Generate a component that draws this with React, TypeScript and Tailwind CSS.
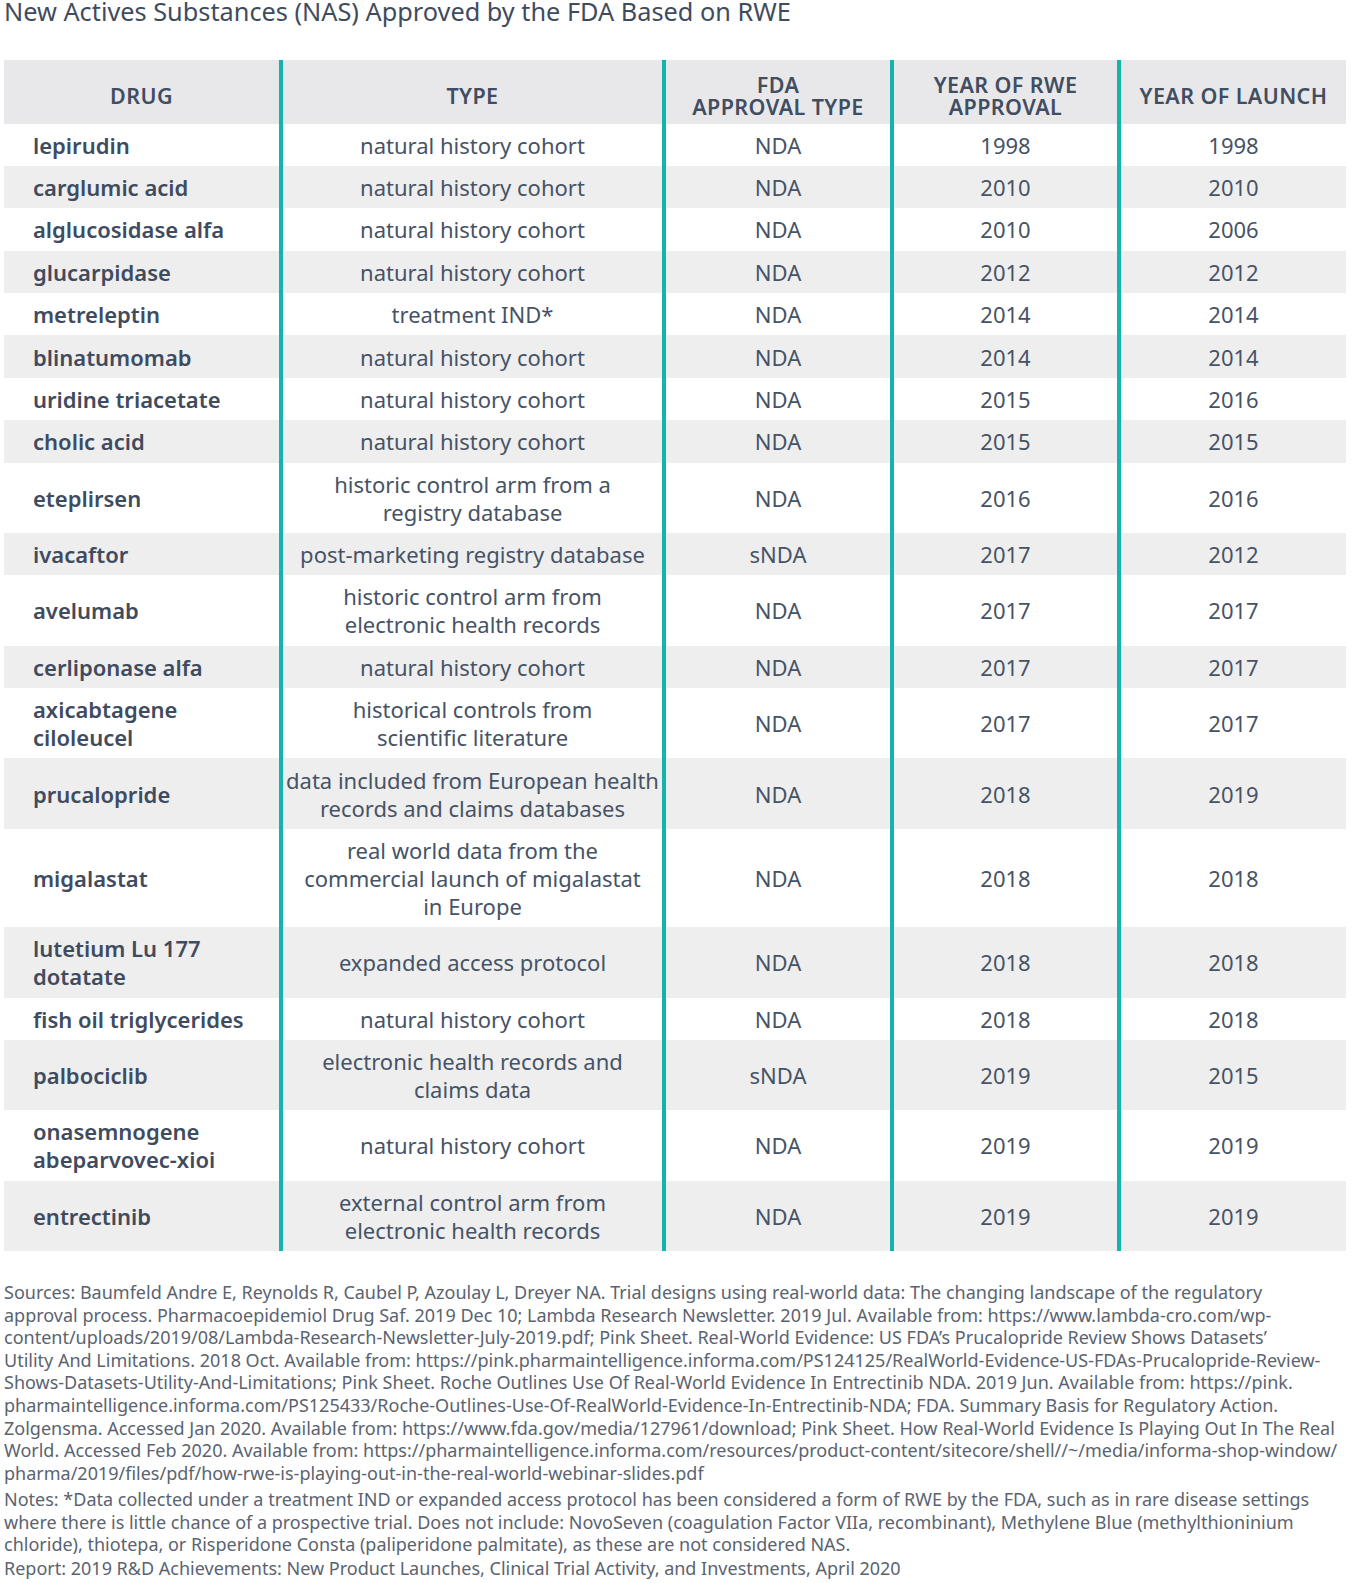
const rows: { drug: string[]; type: string[]; fda: string; rwe: string; launch: string }[] = [
  { drug: ["lepirudin"], type: ["natural history cohort"], fda: "NDA", rwe: "1998", launch: "1998" },
  { drug: ["carglumic acid"], type: ["natural history cohort"], fda: "NDA", rwe: "2010", launch: "2010" },
  { drug: ["alglucosidase alfa"], type: ["natural history cohort"], fda: "NDA", rwe: "2010", launch: "2006" },
  { drug: ["glucarpidase"], type: ["natural history cohort"], fda: "NDA", rwe: "2012", launch: "2012" },
  { drug: ["metreleptin"], type: ["treatment IND*"], fda: "NDA", rwe: "2014", launch: "2014" },
  { drug: ["blinatumomab"], type: ["natural history cohort"], fda: "NDA", rwe: "2014", launch: "2014" },
  { drug: ["uridine triacetate"], type: ["natural history cohort"], fda: "NDA", rwe: "2015", launch: "2016" },
  { drug: ["cholic acid"], type: ["natural history cohort"], fda: "NDA", rwe: "2015", launch: "2015" },
  { drug: ["eteplirsen"], type: ["historic control arm from a", "registry database"], fda: "NDA", rwe: "2016", launch: "2016" },
  { drug: ["ivacaftor"], type: ["post-marketing registry database"], fda: "sNDA", rwe: "2017", launch: "2012" },
  { drug: ["avelumab"], type: ["historic control arm from", "electronic health records"], fda: "NDA", rwe: "2017", launch: "2017" },
  { drug: ["cerliponase alfa"], type: ["natural history cohort"], fda: "NDA", rwe: "2017", launch: "2017" },
  { drug: ["axicabtagene", "ciloleucel"], type: ["historical controls from", "scientific literature"], fda: "NDA", rwe: "2017", launch: "2017" },
  { drug: ["prucalopride"], type: ["data included from European health", "records and claims databases"], fda: "NDA", rwe: "2018", launch: "2019" },
  { drug: ["migalastat"], type: ["real world data from the", "commercial launch of migalastat", "in Europe"], fda: "NDA", rwe: "2018", launch: "2018" },
  { drug: ["lutetium Lu 177", "dotatate"], type: ["expanded access protocol"], fda: "NDA", rwe: "2018", launch: "2018" },
  { drug: ["fish oil triglycerides"], type: ["natural history cohort"], fda: "NDA", rwe: "2018", launch: "2018" },
  { drug: ["palbociclib"], type: ["electronic health records and", "claims data"], fda: "sNDA", rwe: "2019", launch: "2015" },
  { drug: ["onasemnogene", "abeparvovec-xioi"], type: ["natural history cohort"], fda: "NDA", rwe: "2019", launch: "2019" },
  { drug: ["entrectinib"], type: ["external control arm from", "electronic health records"], fda: "NDA", rwe: "2019", launch: "2019" },
];

const sources = [
  "Sources: Baumfeld Andre E, Reynolds R, Caubel P, Azoulay L, Dreyer NA. Trial designs using real-world data: The changing landscape of the regulatory",
  "approval process. Pharmacoepidemiol Drug Saf. 2019 Dec 10; Lambda Research Newsletter. 2019 Jul. Available from: https://www.lambda-cro.com/wp-",
  "content/uploads/2019/08/Lambda-Research-Newsletter-July-2019.pdf; Pink Sheet. Real-World Evidence: US FDA\u2019s Prucalopride Review Shows Datasets\u2019",
  "Utility And Limitations. 2018 Oct. Available from: https://pink.pharmaintelligence.informa.com/PS124125/RealWorld-Evidence-US-FDAs-Prucalopride-Review-",
  "Shows-Datasets-Utility-And-Limitations; Pink Sheet. Roche Outlines Use Of Real-World Evidence In Entrectinib NDA. 2019 Jun. Available from: https://pink.",
  "pharmaintelligence.informa.com/PS125433/Roche-Outlines-Use-Of-RealWorld-Evidence-In-Entrectinib-NDA; FDA. Summary Basis for Regulatory Action.",
  "Zolgensma. Accessed Jan 2020. Available from: https://www.fda.gov/media/127961/download; Pink Sheet. How Real-World Evidence Is Playing Out In The Real",
  "World. Accessed Feb 2020. Available from: https://pharmaintelligence.informa.com/resources/product-content/sitecore/shell//~/media/informa-shop-window/",
  "pharma/2019/files/pdf/how-rwe-is-playing-out-in-the-real-world-webinar-slides.pdf",
];

const notes = [
  "Notes: *Data collected under a treatment IND or expanded access protocol has been considered a form of RWE by the FDA, such as in rare disease settings",
  "where there is little chance of a prospective trial. Does not include: NovoSeven (coagulation Factor VIIa, recombinant), Methylene Blue (methylthioninium",
  "chloride), thiotepa, or Risperidone Consta (paliperidone palmitate), as these are not considered NAS.",
];

function Lines({ lines }: { lines: string[] }) {
  return (
    <>
      {lines.map((l, i) => (
        <div key={i} className="whitespace-nowrap">{l}</div>
      ))}
    </>
  );
}

export default function App() {
  return (
    <div className="w-[1352px] bg-white font-['Noto_Sans',sans-serif] text-[#3f4b5e]">
      {/* Title */}
      <h1 className="pl-[4px] text-[25.3px] leading-[22px] font-normal text-[#3f4b5e]">
        New Actives Substances (NAS) Approved by the FDA Based on RWE
      </h1>

      {/* Table */}
      <div className="mt-[38px] ml-[4px] w-[1342px]">
        <div className="grid grid-cols-[275px_383px_228px_227px_229px] bg-[#e8e8eb] text-[21.5px] font-semibold uppercase leading-[22px] tracking-[0.4px] text-[#414d60]">
          <div className="flex h-[63.5px] items-center justify-center pt-[9px] text-center">Drug</div>
          <div className="flex items-center justify-center border-l-4 border-[#14b3ab] pt-[9px] text-center">Type</div>
          <div className="flex items-center justify-center border-l-4 border-[#14b3ab] pt-[9px] text-center">
            FDA<br />Approval Type
          </div>
          <div className="flex items-center justify-center border-l-4 border-[#14b3ab] pt-[9px] text-center">
            Year of RWE<br />Approval
          </div>
          <div className="flex items-center justify-center border-l-4 border-[#14b3ab] pt-[9px] text-center">Year of Launch</div>
        </div>

        {rows.map((r, i) => (
          <div
            key={i}
            className={`grid grid-cols-[275px_383px_228px_227px_229px] text-[22px] leading-[28px] ${
              i % 2 === 1 ? "bg-[#eeeeee]" : "bg-white"
            }`}
          >
            <div className="flex flex-col justify-center py-[7.2px] pl-[29px] font-semibold text-[#3f4b5e]">
              <Lines lines={r.drug} />
            </div>
            <div className="flex flex-col items-center justify-center border-l-4 border-[#14b3ab] py-[7.2px] text-center text-[#465366]">
              <Lines lines={r.type} />
            </div>
            <div className="flex items-center justify-center border-l-4 border-[#14b3ab] py-[7.2px] text-[#465366]">{r.fda}</div>
            <div className="flex items-center justify-center border-l-4 border-[#14b3ab] py-[7.2px] text-[#465366]">{r.rwe}</div>
            <div className="flex items-center justify-center border-l-4 border-[#14b3ab] py-[7.2px] text-[#465366]">{r.launch}</div>
          </div>
        ))}
      </div>

      {/* Footnotes */}
      <div className="mt-[30px] pl-[4px] text-[18px] leading-[22.6px] text-[#5a6370]">
        <Lines lines={sources} />
        <div className="mt-[3.6px]">
          <Lines lines={notes} />
        </div>
        <div className="mt-[1.2px]">Report: 2019 R&amp;D Achievements: New Product Launches, Clinical Trial Activity, and Investments, April 2020</div>
      </div>
    </div>
  );
}
